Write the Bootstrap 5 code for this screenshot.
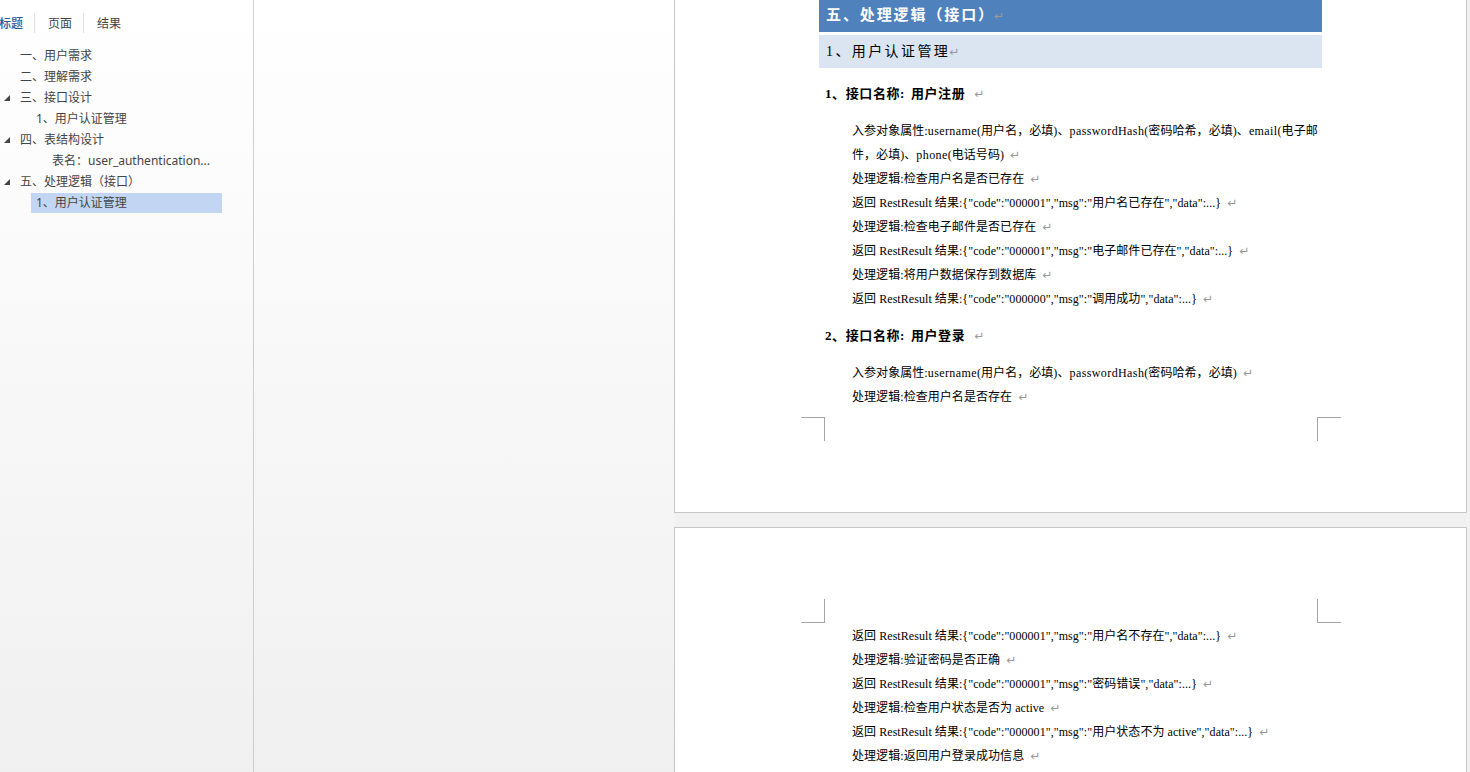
<!DOCTYPE html>
<html lang="zh-CN">
<head>
    <meta charset="UTF-8">
    <meta name="viewport" content="width=device-width, initial-scale=1.0">
    <title>文档结构图</title>
    <link href="https://cdn.jsdelivr.net/npm/bootstrap@5.3.0/dist/css/bootstrap.min.css" rel="stylesheet">
    <style>
        html, body {
            height: 100%;
            overflow: hidden;
        }
        body {
            background-color: #f1f1f1;
            font-family: "Liberation Serif", "Noto Sans CJK SC", serif;
        }
        .side-panel {
            width: 254px;
            height: 772px;
            border-right: 1px solid #cfcfcf;
            background: linear-gradient(#fff, #f0f0f0);
            font-family: "Noto Sans", "Noto Sans CJK SC", sans-serif;
            font-size: 12px;
            color: #444;
        }
        .side-tabs {
            height: 45px;
            padding-top: 13px;
        }
        .side-tab {
            height: 20px;
            line-height: 21px;
            padding: 0 11px 0 13px;
            border-right: 1px solid #e2e2e2;
            white-space: nowrap;
        }
        .side-tab:first-child {
            padding: 0;
            color: #2b579a;
            font-weight: 500;
            width: 35px;
            text-indent: -1px;
        }
        .side-tab:last-child {
            border-right: 0;
        }
        .tree-row {
            height: 21px;
            line-height: 21px;
            white-space: nowrap;
        }
        .tree-arrow {
            width: 0;
            height: 0;
            margin-left: 4px;
            margin-right: -10px;
            border-style: solid;
            border-width: 0 0 6px 6px;
            border-color: transparent transparent #444 transparent;
        }
        .tree-l1 { padding-left: 20px; }
        .tree-l2 { padding-left: 36px; }
        .tree-l3 { padding-left: 52px; }
        .tree-row.tree-on {
            width: 191px;
            margin-top: 1px;
            margin-left: 31px;
            padding-left: 5px;
            height: 20px;
            line-height: 19px;
            background-color: #c2d5f2;
        }
        .mid-panel {
            width: 420px;
            height: 772px;
            background: linear-gradient(#fff, #f0f0f0);
        }
        .doc-area {
            width: 793px;
        }
        .doc-page {
            position: relative;
            background-color: #fff;
            border: 1px solid #c6c6c6;
            width: 793px;
            color: #000;
            font-size: 12px;
        }
        .page-one {
            height: 513px;
            border-top: 0;
            margin-bottom: 14px;
        }
        .page-two {
            height: 245px;
            border-bottom: 0;
            padding-top: 95px;
        }
        .head-one {
            margin-left: 144px;
            width: 503px;
            height: 32px;
            line-height: 31px;
            padding-left: 7px;
            background-color: #4f81bd;
            color: #fff;
            font-size: 15px;
            font-weight: 700;
            letter-spacing: 1.9px;
        }
        .head-two {
            margin-left: 144px;
            margin-top: 3px;
            width: 503px;
            height: 33px;
            line-height: 34px;
            padding-left: 7px;
            background-color: #dbe5f1;
            font-size: 14px;
            letter-spacing: 2.4px;
        }
        .head-three {
            margin-left: 150px;
            height: 24px;
            line-height: 26px;
            font-size: 13px;
            font-weight: 700;
            letter-spacing: .6px;
            word-spacing: 2px;
            margin-top: 13px;
            margin-bottom: 13px;
        }
        .doc-line {
            margin-left: 177px;
            height: 24px;
            line-height: 26px;
            letter-spacing: .06px;
            white-space: nowrap;
        }
        .wide-latin {
            letter-spacing: .4px;
        }
        .para-mark {
            color: #999;
            font-family: "DejaVu Sans", sans-serif;
            font-size: 12px;
            line-height: 1;
            font-weight: 400;
            letter-spacing: 0;
            margin-left: 3px;
        }
        .head-one .para-mark, .head-two .para-mark {
            margin-left: -1px;
        }
        .crop-mark {
            position: absolute;
            width: 24px;
            height: 24px;
            border-color: #a6a6a6;
            border-style: solid;
            border-width: 0;
        }
        .crop-a { left: 126px; top: 417px; border-top-width: 1px; border-right-width: 1px; }
        .crop-b { left: 642px; top: 417px; border-top-width: 1px; border-left-width: 1px; }
        .crop-c { left: 126px; top: 71px; border-bottom-width: 1px; border-right-width: 1px; }
        .crop-d { left: 642px; top: 71px; border-bottom-width: 1px; border-left-width: 1px; }
    </style>
</head>
<body>
<div class="d-flex">
    <!-- panneau de navigation -->
    <div class="side-panel flex-shrink-0">
        <div class="side-tabs d-flex">
            <div class="side-tab">标题</div>
            <div class="side-tab">页面</div>
            <div class="side-tab">结果</div>
        </div>
        <div class="tree-row tree-l1">一、用户需求</div>
        <div class="tree-row tree-l1">二、理解需求</div>
        <div class="tree-row d-flex align-items-center"><span class="tree-arrow"></span><span class="tree-l1">三、接口设计</span></div>
        <div class="tree-row tree-l2">1、用户认证管理</div>
        <div class="tree-row d-flex align-items-center"><span class="tree-arrow"></span><span class="tree-l1">四、表结构设计</span></div>
        <div class="tree-row tree-l3">表名：user_authentication...</div>
        <div class="tree-row d-flex align-items-center"><span class="tree-arrow"></span><span class="tree-l1">五、处理逻辑（接口）</span></div>
        <div class="tree-row tree-on">1、用户认证管理</div>
    </div>

    <div class="mid-panel flex-shrink-0"></div>

    <!-- pages du document -->
    <div class="doc-area flex-shrink-0">
        <div class="doc-page page-one">
            <div class="head-one">五、处理逻辑（接口）<span class="para-mark">↵</span></div>
            <div class="head-two">1、用户认证管理<span class="para-mark">↵</span></div>
            <div class="head-three">1、接口名称: 用户注册 <span class="para-mark">↵</span></div>
            <div class="doc-line">入参对象属性:<span class="wide-latin">username</span>(用户名，必填)、<span class="wide-latin">passwordHash</span>(密码哈希，必填)、<span class="wide-latin">email</span>(电子邮</div>
            <div class="doc-line">件，必填)、<span class="wide-latin">phone</span>(电话号码) <span class="para-mark">↵</span></div>
            <div class="doc-line">处理逻辑:检查用户名是否已存在 <span class="para-mark">↵</span></div>
            <div class="doc-line">返回 RestResult 结果:{"code":"000001","msg":"用户名已存在","data":...} <span class="para-mark">↵</span></div>
            <div class="doc-line">处理逻辑:检查电子邮件是否已存在 <span class="para-mark">↵</span></div>
            <div class="doc-line">返回 RestResult 结果:{"code":"000001","msg":"电子邮件已存在","data":...} <span class="para-mark">↵</span></div>
            <div class="doc-line">处理逻辑:将用户数据保存到数据库 <span class="para-mark">↵</span></div>
            <div class="doc-line">返回 RestResult 结果:{"code":"000000","msg":"调用成功","data":...} <span class="para-mark">↵</span></div>
            <div class="head-three">2、接口名称: 用户登录 <span class="para-mark">↵</span></div>
            <div class="doc-line">入参对象属性:<span class="wide-latin">username</span>(用户名，必填)、<span class="wide-latin">passwordHash</span>(密码哈希，必填) <span class="para-mark">↵</span></div>
            <div class="doc-line">处理逻辑:检查用户名是否存在 <span class="para-mark">↵</span></div>
            <span class="crop-mark crop-a"></span>
            <span class="crop-mark crop-b"></span>
        </div>
        <div class="doc-page page-two">
            <span class="crop-mark crop-c"></span>
            <span class="crop-mark crop-d"></span>
            <div class="doc-line">返回 RestResult 结果:{"code":"000001","msg":"用户名不存在","data":...} <span class="para-mark">↵</span></div>
            <div class="doc-line">处理逻辑:验证密码是否正确 <span class="para-mark">↵</span></div>
            <div class="doc-line">返回 RestResult 结果:{"code":"000001","msg":"密码错误","data":...} <span class="para-mark">↵</span></div>
            <div class="doc-line">处理逻辑:检查用户状态是否为 active <span class="para-mark">↵</span></div>
            <div class="doc-line">返回 RestResult 结果:{"code":"000001","msg":"用户状态不为 active","data":...} <span class="para-mark">↵</span></div>
            <div class="doc-line">处理逻辑:返回用户登录成功信息 <span class="para-mark">↵</span></div>
        </div>
    </div>
</div>
<script src="https://cdn.jsdelivr.net/npm/bootstrap@5.3.0/dist/js/bootstrap.bundle.min.js"></script>
</body>
</html>
